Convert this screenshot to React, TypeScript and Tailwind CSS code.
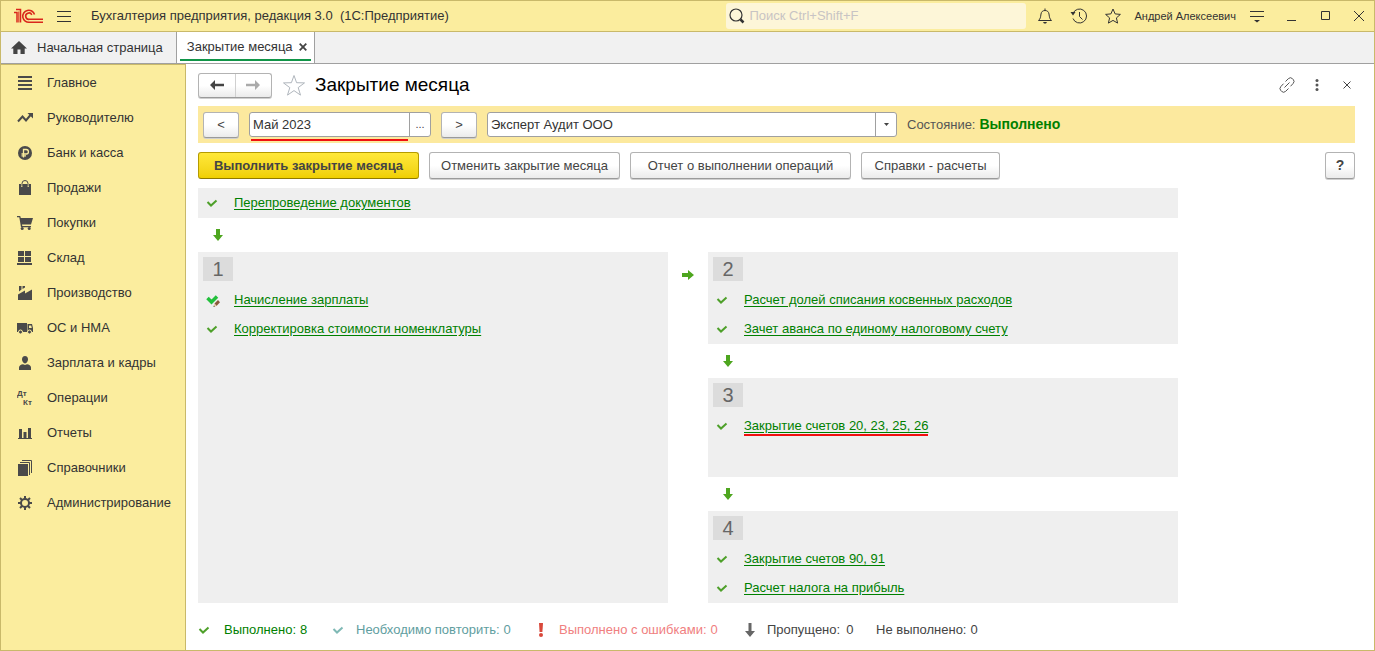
import { ReactNode } from "react";

type IconProps = { children: ReactNode };

function MenuIcon({ children }: IconProps) {
  return (
    <svg
      viewBox="0 0 16 16"
      className="h-4 w-4 shrink-0"
      fill="#4a4a4a"
      aria-hidden="true"
    >
      {children}
    </svg>
  );
}

const sections = [
  {
    title: "Главное",
    icon: <path d="M1 1h14v2H1zM1 5h14v2H1zM1 9h14v2H1zM1 13h14v2H1z" />,
  },
  {
    title: "Руководителю",
    icon: (
      <>
        <path
          d="M1 11.5 5.5 6.5 9 10.5 13.5 5"
          fill="none"
          stroke="#4a4a4a"
          strokeWidth="2"
        />
        <path d="M10.5 3H16v5.5z" />
      </>
    ),
  },
  {
    title: "Банк и касса",
    icon: (
      <>
        <circle cx="8" cy="8" r="7" />
        <path
          d="M6.5 12.5v-8h2.7a2.2 2.2 0 0 1 0 4.5H4.5M4.5 10.8h4.5"
          fill="none"
          stroke="#fbed9e"
          strokeWidth="1.3"
        />
      </>
    ),
  },
  {
    title: "Продажи",
    icon: (
      <>
        <path d="M2 4h2v3h1.500V4h5v3H12V4h2v11H2z" />
        <path
          d="M5 6.500V3.500a3 3 0 0 1 6 0v3"
          fill="none"
          stroke="#4a4a4a"
          strokeWidth="1"
        />
      </>
    ),
  },
  {
    title: "Покупки",
    icon: (
      <>
        <path d="M0 1h3.200l.6 2H16l-2 6.500H5L5.300 11H14v1.300H4L2.300 2.300H0z" />
        <circle cx="5.200" cy="13.600" r="1.500" />
        <circle cx="12.200" cy="13.600" r="1.500" />
      </>
    ),
  },
  {
    title: "Склад",
    icon: <path d="M1 1h6v5H1zM8 1h6v5H8zM1 7h6v5H1zM8 7h6v5H8zM0 13h15v2H0z" />,
  },
  {
    title: "Производство",
    icon: (
      <path d="M1 15V9.500L8 5.500v3L15 4.500V15zM2 1h2.500v3.500L2 6.500zM5.500 1H8v1.500L5.500 4z" />
    ),
  },
  {
    title: "ОС и НМА",
    icon: (
      <>
        <path d="M0 3h10v9H0z" />
        <path
          d="M10.500 4H15l1 4v4h-5.500zM12 5.500V8h2.800l-.6-2.500z"
          fillRule="evenodd"
        />
        <circle cx="3.500" cy="12" r="2" stroke="#fbed9e" />
        <circle cx="12.500" cy="12" r="2" stroke="#fbed9e" />
      </>
    ),
  },
  {
    title: "Зарплата и кадры",
    icon: (
      <>
        <path d="M8 1c2 0 3 1.300 3 3.300S9.700 8.500 8 8.500 5 6.300 5 4.300 6 1 8 1z" />
        <path d="M2 15v-2.500C2 10.500 4 9.500 6 9.300L8 10l2-.7c2 .2 4 1.200 4 3.200V15z" />
      </>
    ),
  },
  {
    title: "Операции",
    icon: (
      <g className="font-['Liberation_Sans'] text-[8px] font-bold">
        <text x="0" y="6">
          Дт
        </text>
        <text x="6" y="15">
          Кт
        </text>
      </g>
    ),
  },
  {
    title: "Отчеты",
    icon: <path d="M2 4h3v9H2zM6.500 7h3v6h-3zM11 3h3v10h-3zM1 13h14v1H1z" />,
  },
  {
    title: "Справочники",
    icon: (
      <>
        <path d="M1 4h10v12H1z" />
        <path
          d="M3 2.500h9.500V15M5 .500h9.500V13"
          fill="none"
          stroke="#4a4a4a"
          strokeWidth="1"
        />
      </>
    ),
  },
  {
    title: "Администрирование",
    icon: (
      <>
        <circle
          cx="8"
          cy="8"
          r="4"
          fill="none"
          stroke="#4a4a4a"
          strokeWidth="2"
        />
        <path
          d="M8 1v3M8 12v3M1 8h3M12 8h3M3 3l2 2M11 11l2 2M13 3l-2 2M5 11l-2 2"
          stroke="#4a4a4a"
          strokeWidth="2"
        />
      </>
    ),
  },
];

function Logo() {
  return (
    <svg
      viewBox="0 0 30 16"
      className="h-4 w-[30px]"
      fill="none"
      stroke="#d9261c"
      role="img"
      aria-label="1С"
    >
      <path d="M1 4.500h3v10M3 1.500h4.500v13" strokeWidth="1.500" />
      <path d="M5.800 3.500v11" strokeWidth="1" />
      <path
        d="M21.500 6.500A6 6 0 1 0 16.500 14.200H30"
        strokeWidth="1.600"
      />
      <path
        d="M18.800 6.800A3.200 3.200 0 1 0 16.500 11.300H30"
        strokeWidth="1.600"
      />
    </svg>
  );
}

function CheckIcon({ color = "#4ea02a" }: { color?: string }) {
  return (
    <svg
      viewBox="0 0 12 10"
      className="h-[10px] w-3 shrink-0"
      fill="none"
      stroke={color}
      strokeWidth="2"
      aria-hidden="true"
    >
      <path d="M1.500 4 5 7.500 10.500 2.500" />
    </svg>
  );
}

function ManualCheckIcon() {
  return (
    <svg viewBox="0 0 16 16" className="h-4 w-4 shrink-0" aria-hidden="true">
      <path
        d="M1.500 6 5.500 10 11 4.500"
        fill="none"
        stroke="#22c03c"
        strokeWidth="3.500"
      />
      <path d="M8.500 11.500 12 8l2 2.200-3.500 3.800z" fill="#8a5a3c" />
      <path d="M8.500 11.500 7.500 15l3-1z" fill="#e8c9a0" />
      <path d="M7.500 15l.4-1.500 1 1.100z" fill="#333" />
    </svg>
  );
}

function DownArrow() {
  return (
    <svg
      viewBox="0 0 10 12"
      className="h-3 w-[10px]"
      fill="#4ea61f"
      aria-hidden="true"
    >
      <path d="M3 0h4v6h3L5 12 0 6h3z" />
    </svg>
  );
}

function Connector() {
  return (
    <div className="flex h-[34px] items-center pl-[15px]">
      <DownArrow />
    </div>
  );
}

interface Operation {
  title: string;
  manual?: boolean;
  marked?: boolean;
}

function OperationRow({ operation }: { operation: Operation }) {
  return (
    <li className="flex h-[29px] items-center">
      <span className="flex w-[28px] shrink-0">
        {operation.manual ? <ManualCheckIcon /> : <CheckIcon />}
      </span>
      <a
        href="#"
        className="relative whitespace-nowrap text-[#008000] underline underline-offset-2"
      >
        {operation.title}
        {operation.marked && (
          <span className="absolute inset-x-0 bottom-[-1px] h-[2px] bg-[#f01010]" />
        )}
      </a>
    </li>
  );
}

function Stage({
  number,
  operations,
  className = "",
}: {
  number: number;
  operations: Operation[];
  className?: string;
}) {
  return (
    <section className={`bg-[#efefef] pt-[5px] pb-px ${className}`}>
      <h2 className="ml-[5px] flex h-6 w-[30px] items-center justify-center bg-[#dcdcdc] text-[20px] text-[#666]">
        {number}
      </h2>
      <ul className="pt-1 pl-2">
        {operations.map((operation) => (
          <OperationRow key={operation.title} operation={operation} />
        ))}
      </ul>
    </section>
  );
}

const buttonStyle =
  "flex items-center justify-center rounded-[3px] border border-[#b3b3b3] border-b-[#9a9a9a] bg-linear-to-b from-white from-50% to-[#ebebeb] text-[#444] shadow-[0_1px_0_#cfcfcf]";

function TitleBar() {
  return (
    <header className="flex h-[31px] items-center border-b border-[#c9b96a] bg-[#fbed9e] pl-3 text-[#333]">
      <Logo />
      <button aria-label="Меню" className="ml-[14px]">
        <svg viewBox="0 0 14 12" className="h-3 w-[14px]" stroke="#333">
          <path d="M0 1.500h14M0 6.500h14M0 11.500h14" />
        </svg>
      </button>
      <span className="ml-5 text-[13px] whitespace-pre">
        Бухгалтерия предприятия, редакция 3.0  (1С:Предприятие)
      </span>
      <label className="ml-auto flex h-[26px] w-[300px] items-center rounded-[3px] bg-[#fdf6d8] pl-[3px]">
        <svg viewBox="0 0 16 16" className="h-4 w-4 shrink-0" fill="none" stroke="#333">
          <circle cx="7" cy="7" r="6" strokeWidth="1.200" />
          <path d="m11.500 11.500 3 3" strokeWidth="2.500" />
        </svg>
        <input
          type="search"
          aria-label="Поиск"
          placeholder="Поиск Ctrl+Shift+F"
          className="w-full bg-transparent px-1 text-[13px] outline-none placeholder:text-[#c8c4c4]"
        />
      </label>
      <button aria-label="Уведомления" className="ml-[11px]">
        <svg viewBox="0 0 16 16" className="h-4 w-4" fill="none" stroke="#333">
          <path d="M1.500 12.500h13c-2-2-2-3-2.500-6.500C11.700 3.800 10.300 2.500 8 2.500S4.300 3.800 4 6c-.5 3.500-.5 4.500-2.500 6.500zM8 .500v2" />
          <path d="M6 14h4l-1 1.500H7z" fill="#333" stroke="none" />
        </svg>
      </button>
      <button aria-label="История" className="ml-[17px]">
        <svg viewBox="0 0 18 16" className="h-4 w-[18px]" fill="none" stroke="#333">
          <path d="M3 5.500A7 7 0 1 1 3 10.500M9.500 4v4.500l3 3" />
          <path d="M.5 4h5L3 7.500z" fill="#333" stroke="none" />
        </svg>
      </button>
      <button aria-label="Избранное" className="ml-[17px]">
        <svg viewBox="0 0 16 16" className="h-4 w-4" fill="none" stroke="#333">
          <path d="m8 1 2.100 4.900 5.300.5-4 3.500 1.200 5.200L8 12.400l-4.600 2.700 1.200-5.200-4-3.500 5.300-.5z" />
        </svg>
      </button>
      <span className="ml-[13px] text-[11px]">Андрей Алексеевич</span>
      <button aria-label="Сервис" className="ml-[14px]">
        <svg viewBox="0 0 14 13" className="h-[13px] w-[14px]" stroke="#333">
          <path d="M0 1.500h14M0 6.500h14" />
          <path d="M4 10h6l-3 2.500z" fill="#333" stroke="none" />
        </svg>
      </button>
      <button aria-label="Свернуть" className="ml-[23px]">
        <svg viewBox="0 0 10 10" className="h-[10px] w-[10px]" stroke="#333">
          <path d="M0 9.500h9" />
        </svg>
      </button>
      <button aria-label="Развернуть" className="ml-6">
        <svg
          viewBox="0 0 10 10"
          className="h-[10px] w-[10px]"
          fill="none"
          stroke="#333"
        >
          <path d="M.500.500h8v8h-8z" />
        </svg>
      </button>
      <button aria-label="Закрыть" className="mr-[10px] ml-[23px]">
        <svg viewBox="0 0 10 10" className="h-[10px] w-[10px]" stroke="#333">
          <path d="m0 0 10 10M10 0 0 10" />
        </svg>
      </button>
    </header>
  );
}

function Tabs() {
  return (
    <nav className="flex h-8 border-b border-[#a0a0a0] bg-[#f1f1f1] text-[#333]">
      <a href="#" className="flex items-center pr-[13px] pl-[10px]">
        <svg viewBox="0 0 16 14" className="mr-[10px] h-[14px] w-4" fill="#444">
          <path d="M8 0 16 7.500h-2.300V13H9.500V8.500h-3V13H2.300V7.500H0z" />
        </svg>
        Начальная страница
      </a>
      <div className="flex w-[139px] flex-col border-x border-[#a0a0a0] bg-white px-[3px] pb-[2px]">
        <div className="flex grow items-center justify-between pt-[3px] pr-1 pl-[7px]">
          <a href="#" className="whitespace-nowrap">
            Закрытие месяца
          </a>
          <button aria-label="Закрыть вкладку">
            <svg
              viewBox="0 0 8 8"
              className="h-2 w-2"
              stroke="#444"
              strokeWidth="1.800"
            >
              <path d="m.7.7 6.600 6.600M7.300.7.7 7.300" />
            </svg>
          </button>
        </div>
        <div className="h-[2px] bg-[#119548]" />
      </div>
    </nav>
  );
}

function Sidebar() {
  return (
    <nav className="w-[185px] shrink-0 border-t border-r border-[#c9b96a] bg-[#fbed9e] text-[#333]">
      {sections.map((section) => (
        <a
          key={section.title}
          href="#"
          className="flex h-[35px] items-center gap-[14px] pl-4 whitespace-nowrap"
        >
          <MenuIcon>{section.icon}</MenuIcon>
          {section.title}
        </a>
      ))}
    </nav>
  );
}

function FormHeader() {
  return (
    <div className="flex h-[42px] items-center">
      <div className="flex h-[25px] w-[74px] rounded-[3px] border border-[#b3b3b3] border-b-[#9a9a9a] bg-linear-to-b from-white from-50% to-[#ebebeb] shadow-[0_1px_0_#cfcfcf]">
        <button
          aria-label="Назад"
          className="flex flex-1 items-center justify-center border-r border-[#d0d0d0]"
        >
          <svg viewBox="0 0 14 10" className="h-[10px] w-[14px]" fill="#444">
            <path d="M0 5 5 0v3.800h9v2.400H5V10z" />
          </svg>
        </button>
        <button
          aria-label="Вперед"
          className="flex flex-1 items-center justify-center"
        >
          <svg viewBox="0 0 14 10" className="h-[10px] w-[14px]" fill="#aaa">
            <path d="M14 5 9 0v3.800H0v2.400h9V10z" />
          </svg>
        </button>
      </div>
      <button aria-label="В избранное" className="ml-[10px]">
        <svg
          viewBox="0 0 24 23"
          className="h-[23px] w-6"
          fill="none"
          stroke="#b0b6bd"
        >
          <path d="m12 1.500 2.600 7.200 7.900.2-6.300 4.700 2.300 7.500-6.500-4.500-6.500 4.500 2.300-7.500L1.500 8.900l7.900-.2z" />
        </svg>
      </button>
      <h1 className="ml-[9px] text-[19px] text-black">Закрытие месяца</h1>
      <button aria-label="Получить ссылку" className="ml-auto">
        <svg viewBox="0 0 16 16" className="h-4 w-4" fill="none" stroke="#555">
          <path d="M6.500 4.500 9.300 1.700a3 3 0 0 1 4.200 0l.6.6a3 3 0 0 1 0 4.200L11.500 9.300M9.500 11.500 6.700 14.300a3 3 0 0 1-4.200 0l-.6-.6a3 3 0 0 1 0-4.200L4.500 6.700M5.500 10.500l5-5" />
        </svg>
      </button>
      <button aria-label="Ещё" className="ml-5">
        <svg viewBox="0 0 4 12" className="h-3 w-1" fill="#555">
          <circle cx="2" cy="1.500" r="1.500" />
          <circle cx="2" cy="6" r="1.500" />
          <circle cx="2" cy="10.500" r="1.500" />
        </svg>
      </button>
      <button aria-label="Закрыть форму" className="mr-1 ml-6">
        <svg viewBox="0 0 8 8" className="h-2 w-2" stroke="#444">
          <path d="m.5.5 7 7M7.500.5l-7 7" />
        </svg>
      </button>
    </div>
  );
}

function PeriodBar() {
  return (
    <div className="flex h-[37px] items-center bg-[#fce99e] px-[5px]">
      <button
        aria-label="Предыдущий месяц"
        className={`h-[26px] w-9 ${buttonStyle}`}
      >
        &lt;
      </button>
      <div className="relative ml-[10px] flex h-[25px] w-[182px] rounded-[3px] border border-[#a0a0a0] bg-white">
        <input
          aria-label="Период"
          defaultValue="Май 2023"
          className="min-w-0 flex-1 px-[3px] text-[#333] outline-none"
        />
        <button
          aria-label="Выбрать период"
          className="w-[21px] border-l border-[#a0a0a0] text-[11px] text-[#444]"
        >
          ...
        </button>
        <span className="absolute top-[26px] right-[22px] left-[1px] h-[2px] bg-[#f01010]" />
      </div>
      <button
        aria-label="Следующий месяц"
        className={`ml-[10px] h-[26px] w-9 ${buttonStyle}`}
      >
        &gt;
      </button>
      <div className="relative ml-[10px] h-[25px] w-[410px]">
        <select
          aria-label="Организация"
          className="h-full w-full appearance-none rounded-[3px] border border-[#a0a0a0] bg-white px-[3px] text-[#333] outline-none"
        >
          <option>Эксперт Аудит ООО</option>
        </select>
        <span className="pointer-events-none absolute inset-y-px right-px flex w-[21px] items-center justify-center border-l border-[#a0a0a0]">
          <svg viewBox="0 0 5 3" className="h-[3px] w-[5px]" fill="#444">
            <path d="M0 0h5L2.500 3z" />
          </svg>
        </span>
      </div>
      <span className="ml-[10px] text-[#555]">Состояние:</span>
      <span className="ml-1 text-[14px] font-bold text-[#008000]">
        Выполнено
      </span>
    </div>
  );
}

function Commands() {
  return (
    <div className="mt-[9px] flex h-[27px] gap-[10px]">
      <button className="w-[221px] rounded-[3px] border border-[#b59b00] border-b-[#8f7a00] bg-linear-to-b from-[#ffe838] to-[#f0d000] text-[13px] font-bold whitespace-nowrap text-[#444]">
        Выполнить закрытие месяца
      </button>
      <button className={`w-[191px] whitespace-nowrap ${buttonStyle}`}>
        Отменить закрытие месяца
      </button>
      <button className={`w-[221px] whitespace-nowrap ${buttonStyle}`}>
        Отчет о выполнении операций
      </button>
      <button className={`w-[139px] whitespace-nowrap ${buttonStyle}`}>
        Справки - расчеты
      </button>
      <button
        aria-label="Справка"
        className={`ml-auto w-[30px] text-[14px] font-bold ${buttonStyle}`}
      >
        ?
      </button>
    </div>
  );
}

function Scheme() {
  return (
    <div className="mt-[9px] max-w-[980px]">
      <ul className="bg-[#efefef] pb-px pl-2">
        <OperationRow operation={{ title: "Перепроведение документов" }} />
      </ul>
      <Connector />
      <div className="grid grid-cols-[1fr_40px_1fr]">
        <Stage
          number={1}
          operations={[
            { title: "Начисление зарплаты", manual: true },
            { title: "Корректировка стоимости номенклатуры" },
          ]}
        />
        <div className="flex justify-center pt-[18px]">
          <svg
            viewBox="0 0 12 10"
            className="h-[10px] w-3"
            fill="#4ea61f"
            aria-hidden="true"
          >
            <path d="M0 3h6V0l6 5-6 5V7H0z" />
          </svg>
        </div>
        <div>
          <Stage
            number={2}
            operations={[
              { title: "Расчет долей списания косвенных расходов" },
              { title: "Зачет аванса по единому налоговому счету" },
            ]}
          />
          <Connector />
          <Stage
            number={3}
            className="min-h-[99px]"
            operations={[
              { title: "Закрытие счетов 20, 23, 25, 26", marked: true },
            ]}
          />
          <Connector />
          <Stage
            number={4}
            operations={[
              { title: "Закрытие счетов 90, 91" },
              { title: "Расчет налога на прибыль" },
            ]}
          />
        </div>
      </div>
    </div>
  );
}

function Legend() {
  return (
    <footer className="flex h-[47px] items-center pt-[6px] whitespace-nowrap">
      <div className="flex w-[134px] items-center text-[#008000]">
        <span className="flex w-[26px]">
          <CheckIcon />
        </span>
        Выполнено: <span className="ml-1">8</span>
      </div>
      <div className="flex w-[206px] items-center text-[#5f9ea0]">
        <span className="flex w-6">
          <CheckIcon color="#7fb9b5" />
        </span>
        Необходимо повторить: <span className="ml-1">0</span>
      </div>
      <div className="flex w-[207px] items-center text-[#f08080]">
        <span className="flex w-[21px]">
          <svg
            viewBox="0 0 6 14"
            className="h-[14px] w-[6px]"
            fill="#d9483b"
            aria-hidden="true"
          >
            <path d="M1 0h4l-.6 9H1.600z" />
            <circle cx="3" cy="12" r="2" />
          </svg>
        </span>
        Выполнено с ошибками: <span className="ml-1">0</span>
      </div>
      <div className="flex w-[131px] items-center text-[#444]">
        <span className="flex w-[22px]">
          <svg
            viewBox="0 0 10 14"
            className="h-[14px] w-[10px]"
            fill="#666"
            aria-hidden="true"
          >
            <path d="M3.500 0h3v8H10l-5 6-5-6h3.500z" />
          </svg>
        </span>
        Пропущено: <span className="ml-[6px]">0</span>
      </div>
      <div className="flex items-center text-[#444]">
        Не выполнено: <span className="ml-1">0</span>
      </div>
    </footer>
  );
}

function App() {
  return (
    <div className="flex min-h-screen flex-col border border-[#c9b96a] bg-white font-['Liberation_Sans',Arial,sans-serif] text-[13px]">
      <TitleBar />
      <Tabs />
      <div className="flex grow">
        <Sidebar />
        <main className="min-w-0 grow pr-[19px] pl-3">
          <FormHeader />
          <PeriodBar />
          <Commands />
          <Scheme />
          <Legend />
        </main>
      </div>
    </div>
  );
}

export default App;
